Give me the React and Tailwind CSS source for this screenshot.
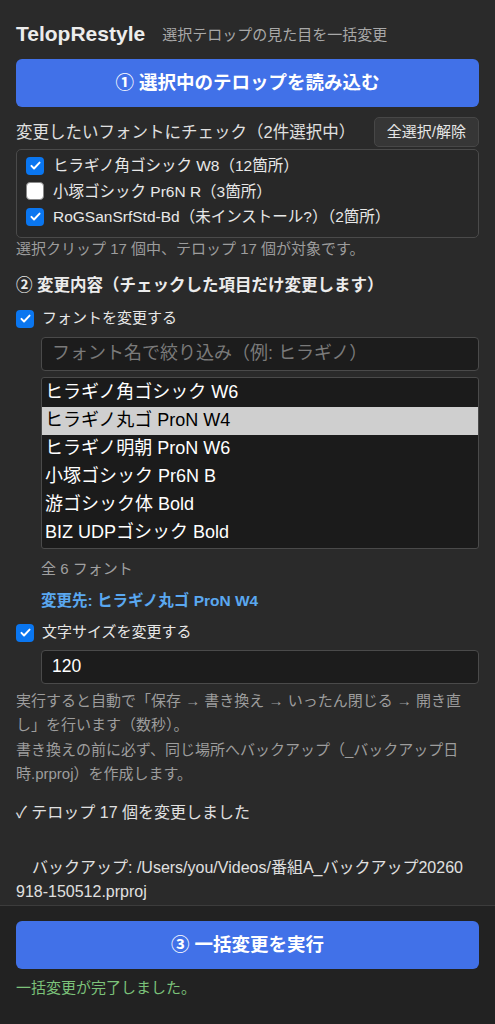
import { useState } from 'react';

const FONT = { fontFamily: '"Liberation Sans", "Noto Sans CJK JP", sans-serif' };

const Check = ({ checked, onChange }) => (
  <button
    type="button"
    onClick={onChange}
    className={`w-[18px] h-[18px] shrink-0 rounded-[4px] flex items-center justify-center ${
      checked ? 'bg-[#0a76f0]' : 'bg-white border border-[#8a8a8a]'
    }`}
  >
    {checked && (
      <svg viewBox="0 0 16 16" className="w-[13px] h-[13px]">
        <path d="M3 8.5l3.2 3.2L13 4.5" fill="none" stroke="white" strokeWidth="2.4" strokeLinecap="round" strokeLinejoin="round" />
      </svg>
    )}
  </button>
);

const detected = [
  { name: 'ヒラギノ角ゴシック W8（12箇所）', on: true },
  { name: '小塚ゴシック Pr6N R（3箇所）', on: false },
  { name: 'RoGSanSrfStd-Bd（未インストール?）（2箇所）', on: true },
];

const fonts = [
  'ヒラギノ角ゴシック W6',
  'ヒラギノ丸ゴ ProN W4',
  'ヒラギノ明朝 ProN W6',
  '小塚ゴシック Pr6N B',
  '游ゴシック体 Bold',
  'BIZ UDPゴシック Bold',
];

export default function App() {
  const [picked, setPicked] = useState(detected.map((d) => d.on));
  const [changeFont, setChangeFont] = useState(true);
  const [changeSize, setChangeSize] = useState(true);
  const [target, setTarget] = useState(1);
  const [size, setSize] = useState('120');

  const toggle = (i) => setPicked(picked.map((v, j) => (j === i ? !v : v)));

  return (
    <div style={FONT} className="w-[495px] min-h-[1024px] bg-[#2a2a2a] text-[#e6e6e6] flex flex-col">
      <div className="px-4 pt-[20px] pb-[1px] flex flex-col">
        {/* Header */}
        <div className="flex items-center gap-[17px] h-[24px] mt-[1px]">
          <h1 className="text-[21px] font-bold text-[#ececec] leading-none">TelopRestyle</h1>
          <span className="text-[15px] text-[#a8a8a8] leading-none mt-[2px]">選択テロップの見た目を一括変更</span>
        </div>

        <button className="mt-[14px] h-[48px] rounded-[6px] bg-[#4171e8] text-white text-[18.5px] font-bold">
          ① 選択中のテロップを読み込む
        </button>

        <div className="mt-[10px] flex items-center justify-between">
          <span className="text-[16.5px] text-[#e0e0e0]">変更したいフォントにチェック（2件選択中）</span>
          <button className="h-[30px] px-[12px] rounded-[5px] bg-[#363636] border border-[#474747] text-[15px] text-[#e6e6e6]">
            全選択/解除
          </button>
        </div>

        <div className="mt-[2px] rounded-[5px] border border-[#4a4a4a] bg-[#282828] pl-[9px] pr-[9px] pt-[3px] pb-[7px] flex flex-col">
          {detected.map((d, i) => (
            <label key={d.name} className="h-[25.5px] flex items-center gap-[9px] text-[15.5px] text-[#e8e8e8]">
              <Check checked={picked[i]} onChange={() => toggle(i)} />
              <span>{d.name}</span>
            </label>
          ))}
        </div>

        <p className="text-[15px] text-[#9d9d9d] leading-[22px]">
          選択クリップ 17 個中、テロップ 17 個が対象です。
        </p>

        <h2 className="mt-[15px] text-[16.5px] font-bold text-[#ececec] leading-[20px]">
          ② 変更内容（チェックした項目だけ変更します）
        </h2>

        <label className="mt-[14px] flex items-center gap-[8px] text-[15px] text-[#e6e6e6] h-[20px]">
          <Check checked={changeFont} onChange={() => setChangeFont(!changeFont)} />
          <span>フォントを変更する</span>
        </label>

        <div className="pl-[25px] flex flex-col">
          <input
            placeholder="フォント名で絞り込み（例: ヒラギノ）"
            className="mt-[8px] h-[34px] rounded-[4px] bg-[#1c1c1c] border border-[#4a4a4a] px-[10px] text-[18px] text-white placeholder-[#7a7a7a] outline-none"
            style={FONT}
          />
          <div className="mt-[6px] rounded-[3px] border border-[#4a4a4a] bg-[#1b1b1b] py-px flex flex-col">
            {fonts.map((f, i) => (
              <div
                key={f}
                onClick={() => setTarget(i)}
                className={`h-[28px] px-[3px] flex items-center text-[18px] ${
                  target === i ? 'bg-[#cfcfcf] text-black' : 'text-white'
                }`}
              >
                {f}
              </div>
            ))}
          </div>
          <p className="mt-[10px] text-[15px] text-[#a0a0a0] leading-[20px]">全 6 フォント</p>
          <p className="mt-[12px] text-[15.5px] font-bold text-[#5aa8f0] leading-[20px]">
            変更先: {fonts[target]}
          </p>
        </div>

        <label className="mt-[12px] flex items-center gap-[8px] text-[15px] text-[#e6e6e6] h-[20px]">
          <Check checked={changeSize} onChange={() => setChangeSize(!changeSize)} />
          <span>文字サイズを変更する</span>
        </label>

        <div className="pl-[25px] flex flex-col">
          <input
            value={size}
            onChange={(e) => setSize(e.target.value)}
            className="mt-[7px] h-[34px] rounded-[4px] bg-[#1c1c1c] border border-[#4a4a4a] px-[10px] text-[17.5px] text-white outline-none"
            style={FONT}
          />
        </div>

        <p className="mt-[5px] text-[15px] text-[#9d9d9d] leading-[24.5px]">
          実行すると自動で「保存 → 書き換え → いったん閉じる → 開き直し」を行います（数秒）。
          <br />
          書き換えの前に必ず、同じ場所へバックアップ（_バックアップ日時.prproj）を作成します。
        </p>

        <p className="mt-[14px] text-[16px] text-[#e0e0e0] leading-[24px]">✓ テロップ 17 個を変更しました</p>
        <p className="mt-[31px] pr-[12px] text-[16px] text-[#e0e0e0] leading-[24px] break-all whitespace-pre-wrap">
          {'\u3000バックアップ: /Users/you/Videos/番組A_バックアップ20260918-150512.prproj'}
        </p>
      </div>

      {/* Footer */}
      <div className="flex-1 border-t border-[#3c3c3c] bg-[#222222] px-4 pt-[15px] flex flex-col">
        <button className="h-[48px] rounded-[6px] bg-[#4171e8] text-white text-[18.5px] font-bold">
          ③ 一括変更を実行
        </button>
        <p className="mt-[8px] text-[15px] text-[#7cc27a] leading-[22px]">一括変更が完了しました。</p>
      </div>
    </div>
  );
}
